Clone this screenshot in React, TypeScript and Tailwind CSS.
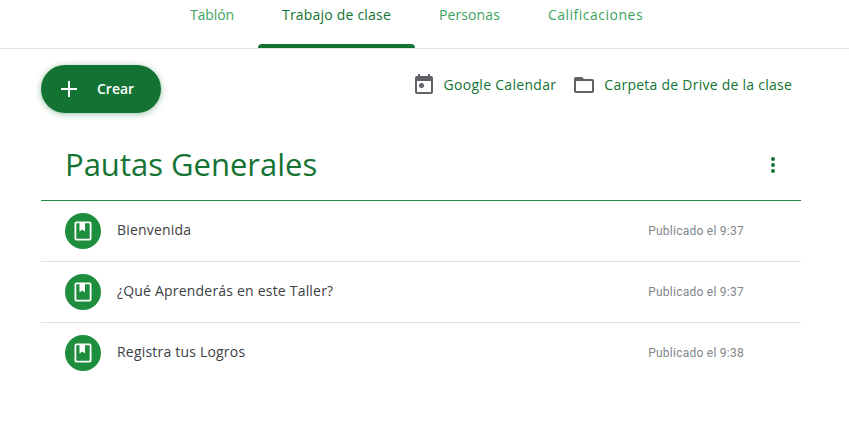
const tabs = [
  { label: "Tablón", spacing: "tracking-[-0.1px]" },
  { label: "Trabajo de clase", spacing: "tracking-[0.2px]", active: true },
  { label: "Personas", spacing: "tracking-[0.1px]" },
  { label: "Calificaciones", spacing: "tracking-[0.5px]" },
]

const items = [
  { title: "Bienvenida", date: "Publicado el 9:37" },
  { title: "¿Qué Aprenderás en este Taller?", date: "Publicado el 9:37" },
  { title: "Registra tus Logros", date: "Publicado el 9:38" },
]

function BookIcon() {
  return (
    <svg width="24" height="24" viewBox="0 0 24 24" fill="none">
      <path
        fillRule="evenodd"
        clipRule="evenodd"
        fill="#fff"
        d="M5.500 2.500h13a2 2 0 0 1 2 2v15a2 2 0 0 1-2 2h-13a2 2 0 0 1-2-2v-15a2 2 0 0 1 2-2zm0 1.800a.2.2 0 0 0-.2.2v15c0 .1.1.2.2.2h13a.2.2 0 0 0 .2-.2v-15a.2.2 0 0 0-.2-.2H14V12.500l-2.700-2-2.800 2V4.300z"
      />
    </svg>
  )
}

export default function App() {
  return (
    <div className="h-[422px] w-[849px] overflow-hidden bg-white font-['Open_Sans',sans-serif]">
      {/* tabs */}
      <nav className="flex h-[49px] border-b border-[#e0e0e0] pl-[166px]">
        {tabs.map(t => (
          <div
            key={t.label}
            className={`relative h-[48px] px-6 pt-[5px] text-sm leading-5 font-medium ${t.spacing} ${
              t.active ? "text-[#137333]" : "text-[#3da35d]"
            }`}
          >
            {t.label}
            {t.active && (
              <span className="absolute right-0 bottom-0 left-0 h-1 rounded-t bg-[#137333]" />
            )}
          </div>
        ))}
      </nav>

      {/* actions */}
      <div className="flex items-start justify-between pr-[57px] pl-[41px] pt-4">
        <button className="flex h-12 w-[120px] items-center rounded-3xl bg-[#137333] pl-5 text-white shadow-[0_1px_6px_rgba(19,115,51,0.45)]">
          <svg width="16" height="16" viewBox="0 0 16 16" fill="none">
            <path d="M8 0v16M0 8h16" stroke="#fff" strokeWidth="2" />
          </svg>
          <span className="ml-5 text-sm font-semibold">Crear</span>
        </button>

        <div className="flex items-center pt-[8px] text-sm font-medium tracking-[0.25px] text-[#137333]">
          <svg className="-mt-[2px]" width="24" height="24" viewBox="0 0 24 24" fill="#5f6368">
            <path d="M19 4h-1V2h-2v2H8V2H6v2H5a2 2 0 0 0-2 2v14a2 2 0 0 0 2 2h14a2 2 0 0 0 2-2V6a2 2 0 0 0-2-2zm0 16H5V9h14v11z" />
            <rect x="7" y="11" width="5" height="5" rx="2.500" />
          </svg>
          <span className="ml-[8px] tracking-[0.3px]">Google Calendar</span>
          <svg className="ml-[16px]" width="24" height="24" viewBox="0 0 24 24" fill="#5f6368">
            <path d="M20 6h-8l-2-2H4a2 2 0 0 0-2 2v12a2 2 0 0 0 2 2h16a2 2 0 0 0 2-2V8a2 2 0 0 0-2-2zm0 12H4V8h16v10z" />
          </svg>
          <span className="ml-[8px]">Carpeta de Drive de la clase</span>
        </div>
      </div>

      {/* topic */}
      <section className="mx-[41px] mt-[18px] w-[760px]">
        <div className="flex h-[70px] items-center justify-between border-b border-[#1e8e3e] pr-[16px] pb-[1px] pl-6">
          <h1 className="-mt-[2px] text-[31px] leading-10 font-normal text-[#137333]">Pautas Generales</h1>
          <svg width="24" height="24" viewBox="0 0 24 24" fill="#137333">
            <circle cx="12" cy="6" r="2" />
            <circle cx="12" cy="12" r="2" />
            <circle cx="12" cy="18" r="2" />
          </svg>
        </div>

        {items.map((item, i) => (
          <div
            key={item.title}
            className={`flex h-[61px] items-center border-b pr-[57px] pl-6 ${
              i < items.length - 1 ? "border-[#e0e0e0]" : "border-transparent"
            }`}
          >
            <div className="flex h-9 w-9 items-center justify-center rounded-full bg-[#1e8e3e]">
              <BookIcon />
            </div>
            <span className="ml-4 flex-1 pb-[2px] text-sm font-medium tracking-[0.2px] text-[#3c4043]">{item.title}</span>
            <span className="font-['Roboto',sans-serif] text-xs tracking-[0.25px] text-[#80868b]">{item.date}</span>
          </div>
        ))}
      </section>
    </div>
  )
}
